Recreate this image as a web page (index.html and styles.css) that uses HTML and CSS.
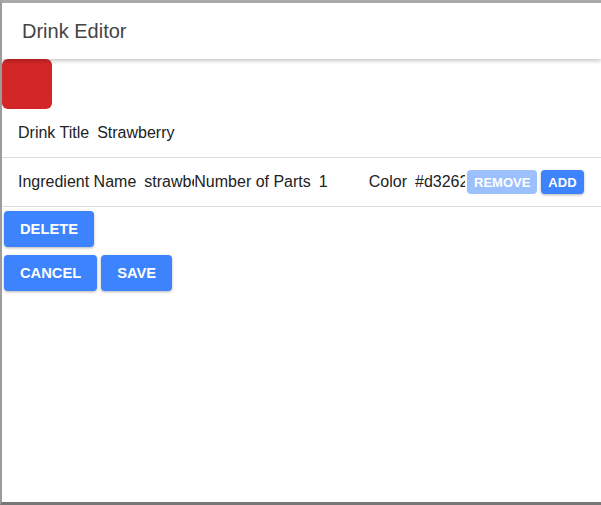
FILE: index.html
```html
<!DOCTYPE html>
<html lang="en">
<head>
<meta charset="utf-8">
<title>Drink Editor</title>
<link rel="stylesheet" href="styles.css">
</head>
<body>
<div class="frame">
  <header class="header">Drink Editor</header>
  <div class="swatch"></div>
  <div class="row title-row">
    <label class="label" for="title">Drink Title</label>
    <input class="field field-wide" id="title" value="Strawberry">
  </div>
  <div class="row ingredient-row">
    <label class="label" for="ing">Ingredient Name</label>
    <input class="field" id="ing" value="strawberry">
    <label class="label" for="parts">Number of Parts</label>
    <input class="field" id="parts" value="1">
    <label class="label" for="color">Color</label>
    <input class="field" id="color" value="#d32626">
    <div class="small-buttons">
      <button class="btn btn-small btn-disabled">Remove</button>
      <button class="btn btn-small">Add</button>
    </div>
  </div>
  <div class="actions">
    <div class="button-line">
      <button class="btn btn-large">Delete</button>
    </div>
    <div class="button-line">
      <button class="btn btn-large">Cancel</button>
      <button class="btn btn-large">Save</button>
    </div>
  </div>
</div>
</body>
</html>
```
FILE: styles.css
```css
* { box-sizing: border-box; }
html, body {
  margin: 0;
  padding: 0;
  background: #ffffff;
}
body {
  font-family: "Liberation Sans", Arial, sans-serif;
  color: #222222;
}
.frame {
  width: 601px;
  height: 505px;
  border-top: 3px solid #a9a9a9;
  border-left: 2px solid #9c9c9c;
  border-bottom: 3px solid #777777;
  background: #ffffff;
  overflow: hidden;
}
.header {
  height: 56px;
  display: flex;
  align-items: center;
  padding-left: 20px;
  font-size: 20px;
  color: #444444;
  box-shadow: 0 2px 4px rgba(0, 0, 0, 0.22);
  position: relative;
  z-index: 1;
  background: #ffffff;
}
.swatch {
  width: 50px;
  height: 50px;
  border-radius: 6px;
  background: #d32626;
}
.row {
  height: 49px;
  display: flex;
  align-items: center;
  padding-left: 16px;
  border-bottom: 1px solid #dddddd;
  font-size: 16px;
}
.label {
  margin-right: 8px;
  white-space: nowrap;
}
.field {
  font: inherit;
  color: #222222;
  border: 0;
  padding: 0;
  margin: 0;
  width: 50px;
  outline: none;
  background: transparent;
}
.field-wide { width: 160px; }
.small-buttons {
  display: flex;
  gap: 4px;
  margin-left: 2px;
}
.btn {
  font-family: "Liberation Sans", Arial, sans-serif;
  font-weight: bold;
  text-transform: uppercase;
  color: #ffffff;
  background: #3c83fd;
  border: 0;
  border-radius: 4px;
  box-shadow: 0 1px 3px rgba(0, 0, 0, 0.3);
  cursor: pointer;
}
.btn-small {
  height: 24px;
  padding: 0 7px;
  font-size: 13px;
}
.btn-disabled {
  background: #9bc0fc;
  box-shadow: none;
}
.btn-large {
  height: 36px;
  padding: 0 16px;
  font-size: 14.7px;
}
.actions {
  padding: 4px 4px 0 2px;
  display: flex;
  flex-direction: column;
  gap: 8px;
}
.button-line {
  display: flex;
  gap: 4px;
}
```
